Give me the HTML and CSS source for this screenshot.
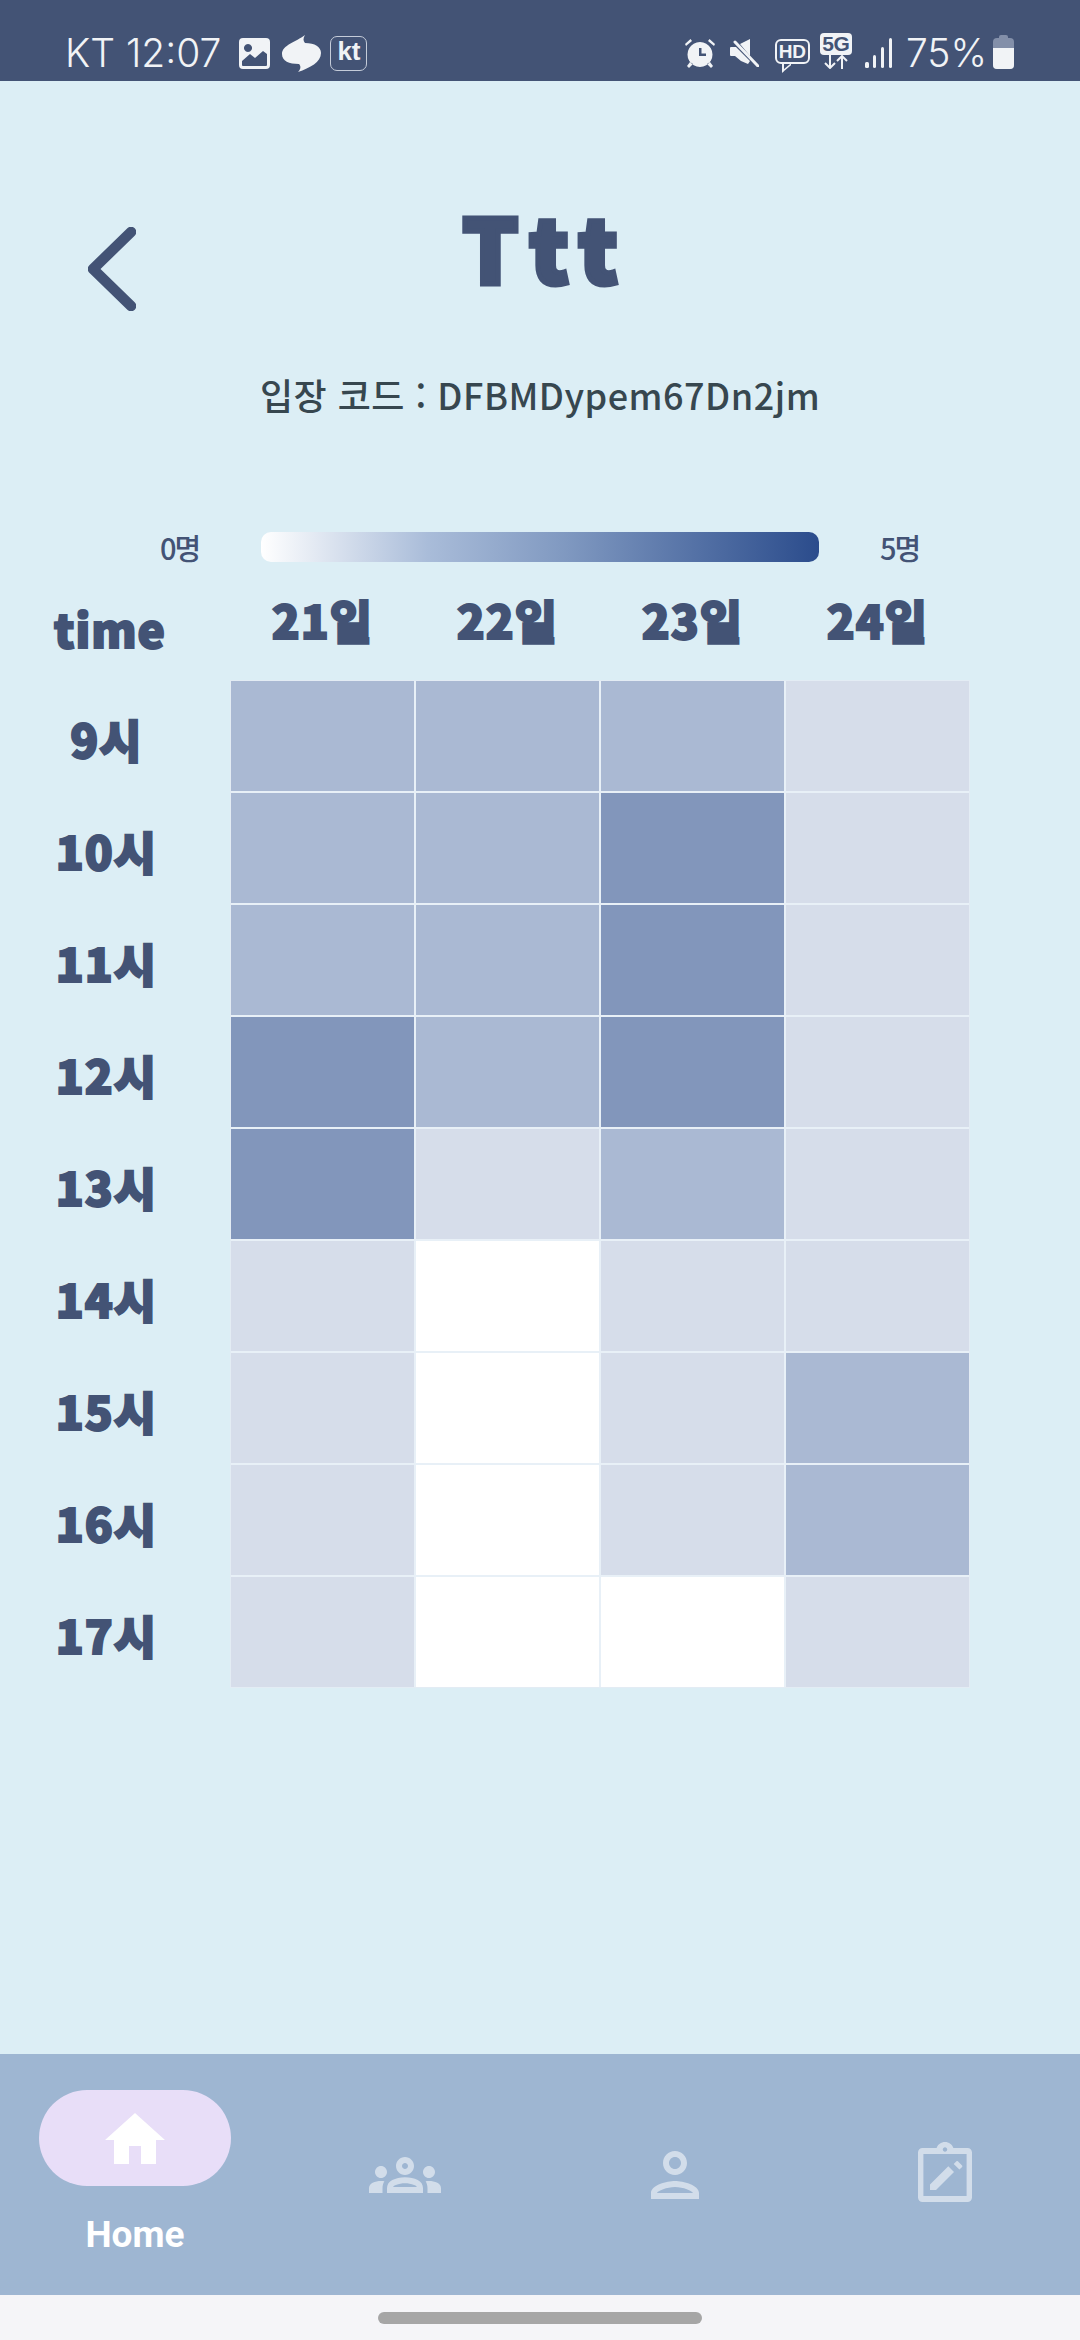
FILE: index.html
```html
<!DOCTYPE html>
<html lang="ko">
    <head>
        <meta charset="UTF-8" />
        <meta name="viewport" content="width=device-width, initial-scale=1.0" />
        <title>Ttt</title>
        <link rel="stylesheet" href="styles.css">
    </head>
    <body>
        <div class="status-bar">
            <div class="status-left">
                <span class="clock">KT 12:07</span>
                <svg class="ic-picture" viewBox="0 0 31 31"><path fill="#f1f3f6" fill-rule="evenodd" d="M4 0h23a4 4 0 0 1 4 4v23a4 4 0 0 1-4 4H4a4 4 0 0 1-4-4V4a4 4 0 0 1 4-4zM3 23v4a1 1 0 0 0 1 1h23a1 1 0 0 0 1-1V16l-4-3-8 7-5-4zM9 6a4 4 0 1 0 .01 0z"/></svg>
                <svg class="ic-swirl" viewBox="0 0 39 37"><path fill="#f1f3f6" d="M23 0C21 3 21 6 23 8 33 8 39 12 39 18 39 27 28 33 16 37 19 34 19 31 17 29 7 29 0 26 0 19 0 10 14 7 23 0z"/></svg>
                <span class="kt-badge">kt</span>
            </div>
            <div class="status-right">
                <svg class="ic-alarm" viewBox="0 0 30 29"><path fill="#f1f3f6" fill-rule="evenodd" d="M15 3a12.500 12.500 0 1 1-.01 0zM14 9v8h7v-2.500h-4.500V9zM1 7 7 2 5.500 0 0 5zM29 7l-6-5 1.500-2L30 5zM5 23l-3 4 2 2 4-4zM25 23l3 4-2 2-4-4z"/></svg>
                <svg class="ic-mute" viewBox="0 0 29 28"><path fill="#f1f3f6" d="M1 8h5l3 3 11 11-2 3-7-3-6-5H1a1 1 0 0 1-1-1V9a1 1 0 0 1 1-1zM10 5l10-5v17z"/><path stroke="#f1f3f6" stroke-width="3" stroke-linecap="round" d="M5 3l23 24"/></svg>
                <span class="hd-badge">HD</span>
                <div class="fiveg">
                    <span class="fiveg-label">5G</span>
                    <svg class="ic-arrows" viewBox="0 0 26 14"><path fill="none" stroke="#f1f3f6" stroke-width="2" d="M7 0v13M2 8l5 5 5-5M19 14V1M14 6l5-5 5 5"/></svg>
                </div>
                <svg class="ic-signal" viewBox="0 0 28 30"><rect x="0" y="24" width="4" height="6" rx="1.500" fill="#f1f3f6"/><rect x="8" y="17" width="3" height="13" rx="1.500" fill="#f1f3f6"/><rect x="16" y="9" width="3" height="21" rx="1.500" fill="#f1f3f6"/><rect x="24" y="0" width="3" height="30" rx="1.500" fill="#f1f3f6"/></svg>
                <span class="battery-text">75%</span>
                <div class="battery"><div class="battery-fill"></div></div>
            </div>
        </div>

        <div class="content">
            <div class="head">
                <svg class="back" viewBox="0 0 48 84"><path fill="none" stroke="#435375" stroke-width="10.500" stroke-linecap="round" stroke-linejoin="round" d="M43 5 5 42l38 37"/></svg>
                <h1 class="title">Ttt</h1>
            </div>
            <p class="code">입장 코드 : DFBMDypem67Dn2jm</p>

            <div class="legend">
                <span class="legend-min">0명</span>
                <div class="legend-bar"></div>
                <span class="legend-max">5명</span>
            </div>

            <div class="head-row">
                <div class="time-label">time</div>
                <div class="day">21일</div>
                <div class="day">22일</div>
                <div class="day">23일</div>
                <div class="day">24일</div>
            </div>

            <div class="table">
                <div class="hours">
                    <div class="hour">9시</div>
                    <div class="hour">10시</div>
                    <div class="hour">11시</div>
                    <div class="hour">12시</div>
                    <div class="hour">13시</div>
                    <div class="hour">14시</div>
                    <div class="hour">15시</div>
                    <div class="hour">16시</div>
                    <div class="hour">17시</div>
                </div>
                <div class="heat">
                    <div class="lv2"></div><div class="lv2"></div><div class="lv2"></div><div class="lv1"></div>
                    <div class="lv2"></div><div class="lv2"></div><div class="lv3"></div><div class="lv1"></div>
                    <div class="lv2"></div><div class="lv2"></div><div class="lv3"></div><div class="lv1"></div>
                    <div class="lv3"></div><div class="lv2"></div><div class="lv3"></div><div class="lv1"></div>
                    <div class="lv3"></div><div class="lv1"></div><div class="lv2"></div><div class="lv1"></div>
                    <div class="lv1"></div><div class="lv0"></div><div class="lv1"></div><div class="lv1"></div>
                    <div class="lv1"></div><div class="lv0"></div><div class="lv1"></div><div class="lv2"></div>
                    <div class="lv1"></div><div class="lv0"></div><div class="lv1"></div><div class="lv2"></div>
                    <div class="lv1"></div><div class="lv0"></div><div class="lv0"></div><div class="lv1"></div>
                </div>
            </div>
        </div>

        <div class="nav">
            <div class="tab">
                <div class="pill">
                    <svg class="ic-home" viewBox="0 0 60 51"><path fill="#fff" d="M30 0 60 27H51V51H36V33H24V51H9V27H0z"/></svg>
                </div>
                <span class="tab-label">Home</span>
            </div>
            <div class="tab">
                <svg class="tab-icon" viewBox="0 0 24 24"><path d="M4,13c1.1,0,2-0.9,2-2c0-1.1-0.9-2-2-2s-2,0.9-2,2C2,12.1,2.9,13,4,13z M5.13,14.1C4.76,14.04,4.39,14,4,14 c-0.99,0-1.93,0.21-2.78,0.58C0.48,14.9,0,15.62,0,16.43V18l4.5,0v-1.61C4.5,15.56,4.73,14.78,5.13,14.1z M20,13c1.1,0,2-0.9,2-2 c0-1.1-0.9-2-2-2s-2,0.9-2,2C18,12.1,18.9,13,20,13z M24,16.43c0-0.81-0.48-1.53-1.22-1.85C21.93,14.21,20.99,14,20,14 c-0.39,0-0.76,0.04-1.13,0.1c0.4,0.68,0.63,1.46,0.63,2.29V18l4.5,0V16.43z M16.24,13.65c-1.17-0.52-2.61-0.9-4.24-0.9 c-1.63,0-3.07,0.39-4.24,0.9C6.68,14.13,6,15.21,6,16.39V18h12v-1.61C18,15.21,17.32,14.13,16.24,13.65z M8.07,16 c0.09-0.23,0.13-0.39,0.91-0.69c0.97-0.38,1.99-0.56,3.02-0.56s2.05,0.18,3.02,0.56c0.77,0.3,0.81,0.46,0.91,0.69H8.07z M12,8 c0.55,0,1,0.45,1,1s-0.45,1-1,1s-1-0.45-1-1S11.45,8,12,8 M12,6c-1.66,0-3,1.34-3,3c0,1.66,1.34,3,3,3s3-1.34,3-3 C15,7.34,13.66,6,12,6L12,6z"/></svg>
            </div>
            <div class="tab">
                <svg class="tab-icon" viewBox="0 0 24 24"><path d="M12 6c1.1 0 2 .9 2 2s-.9 2-2 2-2-.9-2-2 .9-2 2-2m0 10c2.700 0 5.800 1.290 6 2H6c.23-.72 3.310-2 6-2m0-12C9.790 4 8 5.790 8 8s1.790 4 4 4 4-1.790 4-4-1.790-4-4-4zm0 10c-2.670 0-8 1.340-8 4v2h16v-2c0-2.660-5.330-4-8-4z"/></svg>
            </div>
            <div class="tab">
                <svg class="tab-icon" viewBox="0 0 24 24"><path d="M19.500 3h-4.700C14.400 1.840 13.300 1 12 1s-2.400.84-2.800 2H4.500C3.670 3 3 3.670 3 4.500v15c0 .83.67 1.500 1.500 1.500h15c.83 0 1.500-.67 1.500-1.500v-15C21 3.670 20.330 3 19.500 3zM12 2.750c.41 0 .75.34.75.75s-.34.75-.75.75-.75-.34-.75-.75.34-.75.75-.75zM19.200 19H4.800V5h14.400z"/><path d="M7 17h2l6-6-1.900-1.900L7 15.200zM14.900 8.300l1.900 1.900.9-.9a.4.4 0 0 0 0-.5L16.300 7.400a.4.4 0 0 0-.5 0z"/></svg>
            </div>
        </div>
        <div class="gesture"><div class="gesture-bar"></div></div>
    </body>
</html>
```
FILE: styles.css
```css
/* Reset */
* {
    box-sizing: border-box;
    margin: 0;
    padding: 0;
}

body {
    width: 1080px;
    height: 2340px;
    display: flex;
    flex-direction: column;
    background-color: #dceef5;
    font-family: "Noto Sans CJK KR", sans-serif;
    color: #435375;
    overflow: hidden;
}

/* Status bar */
.status-bar {
    height: 81px;
    flex: none;
    display: flex;
    justify-content: space-between;
    align-items: center;
    padding: 25px 66px 0 65px;
    background-color: #435375;
    color: #f1f3f6;
}

.status-left,
.status-right {
    display: flex;
    align-items: center;
}

.clock {
    font-family: Inter, sans-serif;
    font-weight: 300;
    font-size: 39px;
    line-height: 50px;
    margin-right: 18px;
}

.ic-picture {
    width: 31px;
    height: 31px;
    margin-right: 12px;
}

.ic-swirl {
    width: 39px;
    height: 37px;
    margin-right: 9px;
}

.kt-badge {
    width: 37px;
    height: 35px;
    border: 1.5px solid #c5ccd9;
    border-radius: 7px;
    font-family: "Liberation Sans", sans-serif;
    font-weight: 700;
    font-size: 26px;
    line-height: 29px;
    text-align: center;
}

.ic-alarm {
    width: 30px;
    height: 29px;
    margin-right: 15px;
}

.ic-mute {
    width: 29px;
    height: 28px;
    margin-right: 16px;
}

.hd-badge {
    position: relative;
    width: 35px;
    height: 25px;
    margin-right: 10px;
    margin-top: -3px;
    border: 2px solid #f1f3f6;
    border-radius: 6px;
    font-family: "Liberation Sans", sans-serif;
    font-weight: 700;
    font-size: 19px;
    line-height: 21px;
    text-align: center;
}

.hd-badge::after {
    content: "";
    position: absolute;
    left: 5px;
    bottom: -7px;
    width: 7px;
    height: 7px;
    border-left: 2px solid #f1f3f6;
    border-bottom: 2px solid #f1f3f6;
    transform: skewY(-40deg);
}

.fiveg {
    width: 32px;
    margin-right: 13px;
    margin-top: -5px;
}

.fiveg-label {
    display: block;
    height: 22px;
    border-radius: 4px;
    background-color: #f1f3f6;
    color: #435375;
    font-family: "Liberation Sans", sans-serif;
    font-weight: 700;
    font-size: 21px;
    line-height: 22px;
    letter-spacing: -0.5px;
    text-align: center;
}

.ic-arrows {
    display: block;
    width: 26px;
    height: 14px;
    margin: 0 auto;
}

.ic-signal {
    width: 28px;
    height: 30px;
    margin-right: 13px;
}

.battery-text {
    font-family: Inter, sans-serif;
    font-weight: 300;
    font-size: 39px;
    line-height: 50px;
    margin-right: 6px;
}

.battery {
    position: relative;
    width: 21px;
    height: 31px;
    border-radius: 4px;
    background-color: #838fa9;
}

.battery::before {
    content: "";
    position: absolute;
    top: -3px;
    left: 6px;
    width: 9px;
    height: 4px;
    border-radius: 2px 2px 0 0;
    background-color: #838fa9;
}

.battery-fill {
    position: absolute;
    left: 0;
    right: 0;
    bottom: 0;
    height: 21px;
    border-radius: 0 0 4px 4px;
    background-color: #f1f3f6;
}

/* Main content */
.content {
    flex: 1;
    min-height: 0;
}

.head {
    display: grid;
    grid-template-columns: 1fr auto 1fr;
    align-items: start;
    padding-top: 120px;
    height: 214px;
}

.back {
    width: 48px;
    height: 84px;
    margin: 26px 0 0 88px;
}

.title {
    padding-left: 12px;
    font-size: 88px;
    font-weight: 900;
    line-height: 90px;
    letter-spacing: 12px;
    -webkit-text-stroke: 5px #435375;
}

.code {
    margin-top: 74px;
    text-align: center;
    font-size: 36px;
    line-height: 50px;
    font-weight: 500;
    letter-spacing: 0.5px;
    color: #37474f;
}

.legend {
    display: flex;
    align-items: center;
    margin-top: 108px;
    height: 40px;
    padding-left: 160px;
}

.legend-min,
.legend-max {
    font-size: 29px;
    font-weight: 500;
    letter-spacing: -2px;
}

.legend-min {
    width: 101px;
}

.legend-max {
    margin-left: 61px;
}

.legend-bar {
    width: 558px;
    height: 30px;
    border-radius: 10px;
    background: linear-gradient(to right, #fff 0%, #a9bcd9 30%, #7f98c0 55%, #2b4c8c 100%);
}

.head-row {
    display: grid;
    grid-template-columns: 231px repeat(4, 185px);
    align-items: center;
    height: 90px;
    margin-top: 7px;
}

.time-label {
    padding-left: 54px;
    padding-top: 18px;
    font-size: 46px;
    font-weight: 900;
    line-height: 60px;
    letter-spacing: 1px;
    -webkit-text-stroke: 2px #435375;
}

.day {
    padding-right: 2px;
    text-align: center;
    font-size: 46px;
    font-weight: 900;
    line-height: 60px;
    letter-spacing: 1px;
    -webkit-text-stroke: 2px #435375;
}

.table {
    display: flex;
    margin-top: 17px;
}

.hours {
    width: 231px;
    padding-right: 18px;
    display: grid;
    grid-auto-rows: 110px;
    row-gap: 2px;
}

.hour {
    display: flex;
    align-items: center;
    justify-content: center;
    padding-top: 3px;
    font-size: 46px;
    font-weight: 900;
    letter-spacing: 1px;
    -webkit-text-stroke: 2px #435375;
}

.heat {
    display: grid;
    grid-template-columns: repeat(4, 183px);
    grid-auto-rows: 110px;
    gap: 2px;
    outline: 1px solid #e3ecf4;
    background-color: #e8f0f7;
}

.lv0 {
    background-color: #fff;
}

.lv1 {
    background-color: #d6ddea;
}

.lv2 {
    background-color: #aab9d3;
}

.lv3 {
    background-color: #8296bb;
}

/* Bottom navigation */
.nav {
    height: 241px;
    flex: none;
    display: grid;
    grid-template-columns: repeat(4, 270px);
    background-color: #9eb6d2;
}

.tab {
    display: flex;
    flex-direction: column;
    align-items: center;
    justify-content: center;
}

.pill {
    width: 192px;
    height: 96px;
    display: flex;
    align-items: center;
    justify-content: center;
    border-radius: 48px;
    background-color: #e8def8;
}

.ic-home {
    width: 60px;
    height: 51px;
}

.tab-label {
    margin-top: 24px;
    font-family: Roboto, sans-serif;
    font-weight: 700;
    font-size: 37px;
    line-height: 49px;
    color: #fff;
}

.tab-icon {
    width: 72px;
    height: 72px;
    fill: #d2ddea;
}

/* Gesture bar */
.gesture {
    height: 45px;
    flex: none;
    display: flex;
    justify-content: center;
    padding-top: 17px;
    background-color: #f5f5f8;
}

.gesture-bar {
    width: 324px;
    height: 12px;
    border-radius: 6px;
    background-color: #a6a6a6;
}
```
